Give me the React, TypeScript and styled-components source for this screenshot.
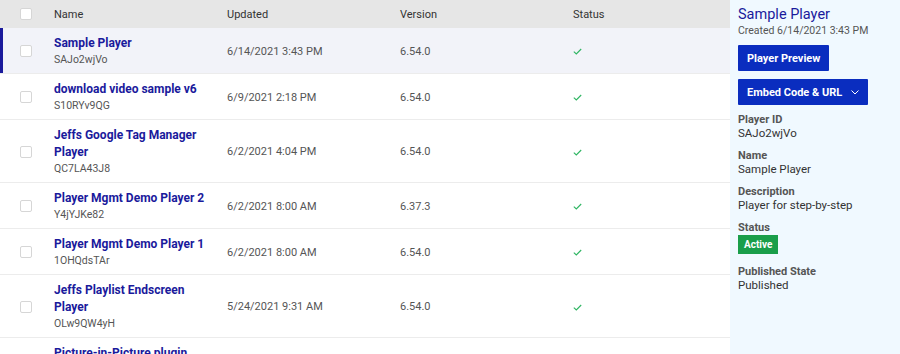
import React from 'react';
import styled, { createGlobalStyle } from 'styled-components';

const GlobalStyle = createGlobalStyle`
    html, body {
        margin: 0;
        padding: 0;
        background: #fff;
    }
    body {
        font-family: "Roboto", "Inter", sans-serif;
        color: #333;
        overflow: hidden;
    }
`

const Page = styled.div`
    display: flex;
    width: 900px;
    height: 354px;
    overflow: hidden;
`

// Players table
const Table = styled.div`
    width: 730px;
    flex-shrink: 0;
`

const cols = '54px 173px 173px 173px 1fr';

const HeaderRow = styled.div`
    display: grid;
    grid-template-columns: ${cols};
    align-items: center;
    height: 28px;
    background-color: #e6e6e6;
    font-size: 11px;
    color: #333;
`

const Row = styled.div<{ $selected?: boolean }>`
    display: grid;
    grid-template-columns: ${cols};
    align-items: center;
    padding: 7px 0 6px;
    border-bottom: 1px solid #ececec;
    background-color: ${p => (p.$selected ? '#f2f3f9' : '#fff')};
    box-shadow: ${p => (p.$selected ? 'inset 3px 0 0 #1a1a9c' : 'none')};
`

const CheckCell = styled.div`
    padding-left: 20px;
    display: flex;
`

const Checkbox = styled.span`
    width: 10px;
    height: 10px;
    border: 1px solid #d6d6d6;
    border-radius: 2px;
    background-color: #fff;
`

const NameCell = styled.div`
    display: flex;
    flex-direction: column;
    padding-right: 10px;
`

const Title = styled.a`
    font-size: 12px;
    font-weight: 700;
    line-height: 17px;
    color: #1a1a9c;
    text-decoration: none;
`

const PlayerId = styled.span`
    font-size: 10.5px;
    line-height: 15px;
    color: #555;
`

const Cell = styled.div`
    font-size: 11px;
    color: #555;
`

const Check = styled.svg`
    width: 9px;
    height: 7px;
    display: block;
    margin-top: 1px;
`

// Details panel
const Panel = styled.aside`
    flex: 1;
    background-color: #f0f9ff;
    padding: 6px 8px;
    box-sizing: border-box;
`

const PanelTitle = styled.h2`
    margin: 0;
    font-size: 14.5px;
    font-weight: 400;
    line-height: 18px;
    color: #1a1a9c;
`

const Created = styled.div`
    font-size: 10.5px;
    line-height: 13px;
    color: #555;
`

const Button = styled.button`
    display: flex;
    align-items: center;
    gap: 9px;
    height: 26px;
    padding: 0 9px;
    margin-top: 8px;
    border: none;
    border-radius: 1px;
    background-color: #0a2dbf;
    color: #fff;
    font-family: inherit;
    font-size: 11px;
    font-weight: 700;
`

const Field = styled.div<{ $gap?: number }>`
    margin-top: ${p => p.$gap ?? 9}px;
`

const Label = styled.div`
    font-size: 11px;
    font-weight: 700;
    line-height: 13px;
    color: #555;
`

const Value = styled.div`
    font-size: 11.5px;
    line-height: 14px;
    color: #333;
`

const Badge = styled.div`
    width: fit-content;
    margin-top: 1px;
    padding: 3px 6px;
    background-color: #1a9e4a;
    color: #fff;
    font-size: 10px;
    font-weight: 700;
    line-height: 13px;
`

const players = [
    { name: 'Sample Player', id: 'SAJo2wjVo', updated: '6/14/2021 3:43 PM', version: '6.54.0' },
    { name: 'download video sample v6', id: 'S10RYv9QG', updated: '6/9/2021 2:18 PM', version: '6.54.0' },
    { name: 'Jeffs Google Tag Manager Player', id: 'QC7LA43J8', updated: '6/2/2021 4:04 PM', version: '6.54.0' },
    { name: 'Player Mgmt Demo Player 2', id: 'Y4jYJKe82', updated: '6/2/2021 8:00 AM', version: '6.37.3' },
    { name: 'Player Mgmt Demo Player 1', id: '1OHQdsTAr', updated: '6/2/2021 8:00 AM', version: '6.54.0' },
    { name: 'Jeffs Playlist Endscreen Player', id: 'OLw9QW4yH', updated: '5/24/2021 9:31 AM', version: '6.54.0' },
    { name: 'Picture-in-Picture plugin', id: 'H2kPq8wLm', updated: '5/20/2021 1:12 PM', version: '6.54.0' },
];

const CheckMark = () => (
    <Check viewBox="0 0 9 7">
        <path d="M0.8 3.6 L3.3 5.9 L8.2 1" fill="none" stroke="#2eb562" strokeWidth="1.1" />
    </Check>
);

const App = () => {
    return (
        <Page>
            <GlobalStyle />
            <Table>
                <HeaderRow>
                    <CheckCell><Checkbox /></CheckCell>
                    <div>Name</div>
                    <div>Updated</div>
                    <div>Version</div>
                    <div>Status</div>
                </HeaderRow>
                {players.map((p, i) => (
                    <Row key={p.id} $selected={i === 0}>
                        <CheckCell><Checkbox /></CheckCell>
                        <NameCell>
                            <Title href="#">{p.name}</Title>
                            <PlayerId>{p.id}</PlayerId>
                        </NameCell>
                        <Cell>{p.updated}</Cell>
                        <Cell>{p.version}</Cell>
                        <Cell><CheckMark /></Cell>
                    </Row>
                ))}
            </Table>
            <Panel>
                <PanelTitle>Sample Player</PanelTitle>
                <Created>Created 6/14/2021 3:43 PM</Created>
                <Button>Player Preview</Button>
                <Button>
                    Embed Code &amp; URL
                    <svg width="8" height="5" viewBox="0 0 8 5">
                        <path d="M0.5 0.5 L4 4 L7.5 0.5" fill="none" stroke="#fff" strokeWidth="1" />
                    </svg>
                </Button>
                <Field $gap={8}>
                    <Label>Player ID</Label>
                    <Value>SAJo2wjVo</Value>
                </Field>
                <Field>
                    <Label>Name</Label>
                    <Value>Sample Player</Value>
                </Field>
                <Field>
                    <Label>Description</Label>
                    <Value>Player for step-by-step</Value>
                </Field>
                <Field>
                    <Label>Status</Label>
                    <Badge>Active</Badge>
                </Field>
                <Field $gap={11}>
                    <Label>Published State</Label>
                    <Value>Published</Value>
                </Field>
            </Panel>
        </Page>
    );
}

export default App;
